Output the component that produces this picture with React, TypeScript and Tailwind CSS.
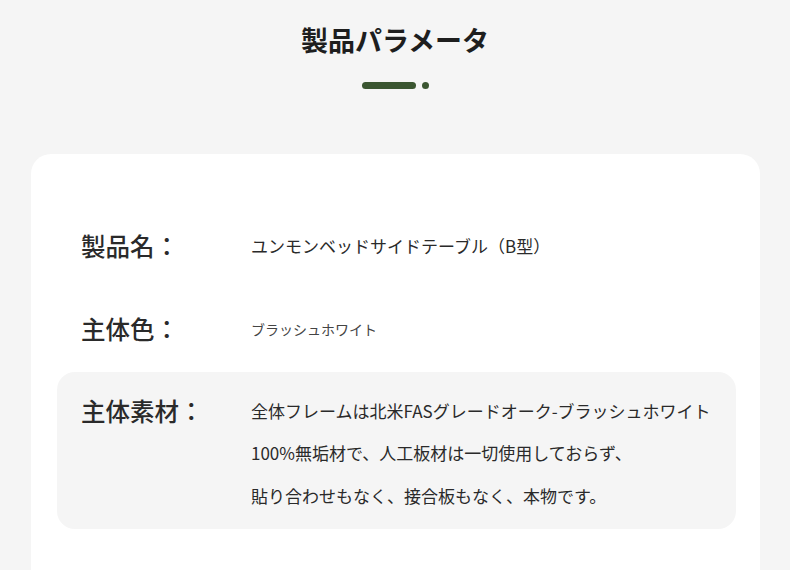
const FONT = '"Noto Sans CJK JP", "Noto Sans", sans-serif';

const SPEC_ROWS = [
  { label: '製品名：', lines: ['ユンモンベッドサイドテーブル（B型）'], small: false, shaded: false },
  { label: '主体色：', lines: ['ブラッシュホワイト'], small: true, shaded: false },
  {
    label: '主体素材：',
    lines: [
      '全体フレームは北米FASグレードオーク-ブラッシュホワイト',
      '100%無垢材で、人工板材は一切使用しておらず、',
      '貼り合わせもなく、接合板もなく、本物です。',
    ],
    small: false,
    shaded: true,
  },
];

export default function App() {
  return (
    <div className="min-h-[570px] h-[570px] overflow-hidden bg-[#f5f5f5]" style={{ fontFamily: FONT }}>
      <div className="flex flex-col items-center pt-[20px]">
        <h1 className="text-[27px] leading-[40px] font-bold text-[#1e1e1e]">製品パラメータ</h1>
        <div className="mt-[22px] flex items-center gap-[6px]">
          <span className="h-[7px] w-[54px] rounded-full bg-[#3b5631]" />
          <span className="h-[7px] w-[7px] rounded-full bg-[#3b5631]" />
        </div>
      </div>

      <div className="ml-[31px] mr-[30px] mt-[65px] h-[500px] rounded-[20px] bg-white pl-[26px] pr-[24px] pt-[53px]">
        <div className="flex flex-col gap-[10px]">
          {SPEC_ROWS.map((row) => (
            <div
              key={row.label}
              className={`flex items-start px-[24px] pt-[18px] pb-[12px] ${row.shaded ? 'rounded-[18px] bg-[#f5f5f5]' : ''}`}
            >
              <div className="w-[170px] shrink-0 text-[24.5px] leading-[42px] font-medium text-[#2a2a2a]">{row.label}</div>
              <div className={row.small ? 'text-[14px] leading-[42px] text-[#444]' : 'text-[17px] leading-[42.5px] text-[#2a2a2a]'}>
                {row.lines.map((line) => (
                  <div key={line}>{line}</div>
                ))}
              </div>
            </div>
          ))}
        </div>
      </div>
    </div>
  );
}
